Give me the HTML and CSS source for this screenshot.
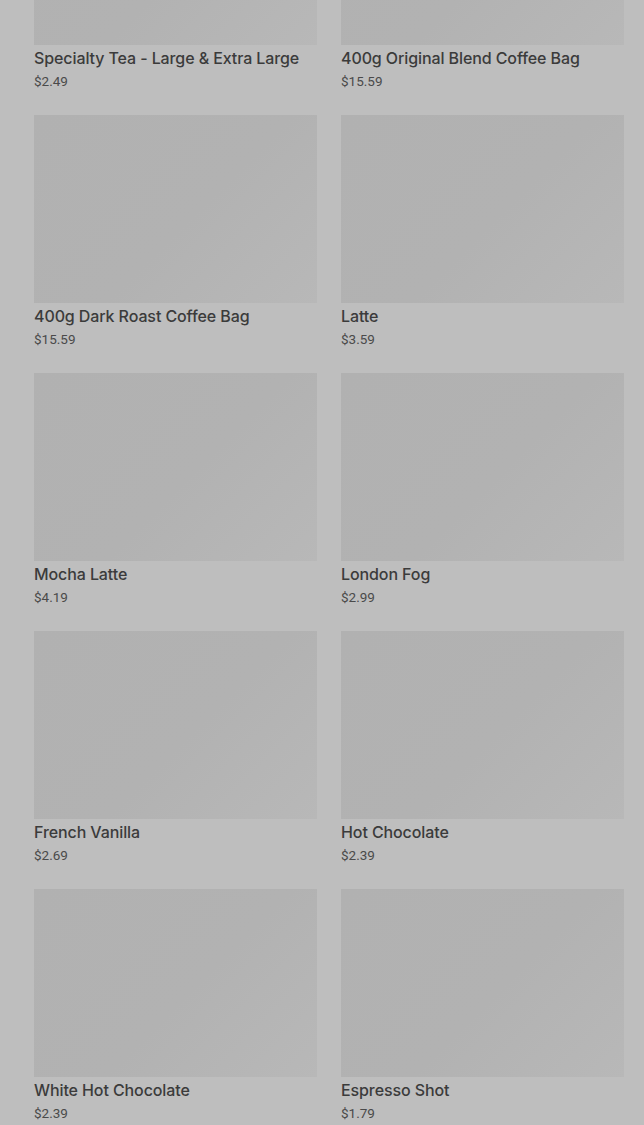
FILE: index.html
```html
<!DOCTYPE html>
<html lang="en">
<head>
    <meta charset="UTF-8">
    <meta name="viewport" content="width=device-width, initial-scale=1.0">
    <title>Menu</title>
    <link rel="stylesheet" href="styles.css">
</head>
<body>
    <div class="page">
        <ul class="product_list">
            <li class="product">
                <div class="product_img"></div>
                <h3 class="product_name">Specialty Tea - Large &amp; Extra Large</h3>
                <p class="product_price">$2.49</p>
            </li>
            <li class="product">
                <div class="product_img"></div>
                <h3 class="product_name">400g Original Blend Coffee Bag</h3>
                <p class="product_price">$15.59</p>
            </li>
            <li class="product">
                <div class="product_img"></div>
                <h3 class="product_name">400g Dark Roast Coffee Bag</h3>
                <p class="product_price">$15.59</p>
            </li>
            <li class="product">
                <div class="product_img"></div>
                <h3 class="product_name">Latte</h3>
                <p class="product_price">$3.59</p>
            </li>
            <li class="product">
                <div class="product_img"></div>
                <h3 class="product_name">Mocha Latte</h3>
                <p class="product_price">$4.19</p>
            </li>
            <li class="product">
                <div class="product_img"></div>
                <h3 class="product_name">London Fog</h3>
                <p class="product_price">$2.99</p>
            </li>
            <li class="product">
                <div class="product_img"></div>
                <h3 class="product_name">French Vanilla</h3>
                <p class="product_price">$2.69</p>
            </li>
            <li class="product">
                <div class="product_img"></div>
                <h3 class="product_name">Hot Chocolate</h3>
                <p class="product_price">$2.39</p>
            </li>
            <li class="product">
                <div class="product_img"></div>
                <h3 class="product_name">White Hot Chocolate</h3>
                <p class="product_price">$2.39</p>
            </li>
            <li class="product">
                <div class="product_img"></div>
                <h3 class="product_name">Espresso Shot</h3>
                <p class="product_price">$1.79</p>
            </li>
        </ul>
    </div>
</body>
</html>
```
FILE: styles.css
```css
html,body,ul,h3,p{
    margin: 0;
    padding: 0;
}
html{
    background-color: #bebebe;
}
body{
    font-family: Inter, Roboto, 'Liberation Sans', sans-serif;
    color: #3a3a3a;
    overflow: hidden;
}
/* the list is scrolled down a bit, so the first row is cut off */
.page{
    padding: 0 20px 0 34px;
    margin-top: -143px;
}
.product_list{
    list-style: none;
    display: grid;
    grid-template-columns: 1fr 1fr;
    column-gap: 24px;
}
.product{
    padding-bottom: 24px;
}
.product_img{
    height: 188px;
    background: linear-gradient(135deg, #b1b1b1 0%, #b2b2b2 55%, #b8b8b8 100%);
}
.product_name{
    margin-top: 2px;
    font-size: 16px;
    font-weight: 500;
    line-height: 22px;
    letter-spacing: -0.1px;
    color: #3b3b3b;
}
.product_price{
    margin-top: 2px;
    font-family: Roboto, 'Liberation Sans', sans-serif;
    font-size: 13.5px;
    line-height: 20px;
    color: #4a4a4a;
}
```
